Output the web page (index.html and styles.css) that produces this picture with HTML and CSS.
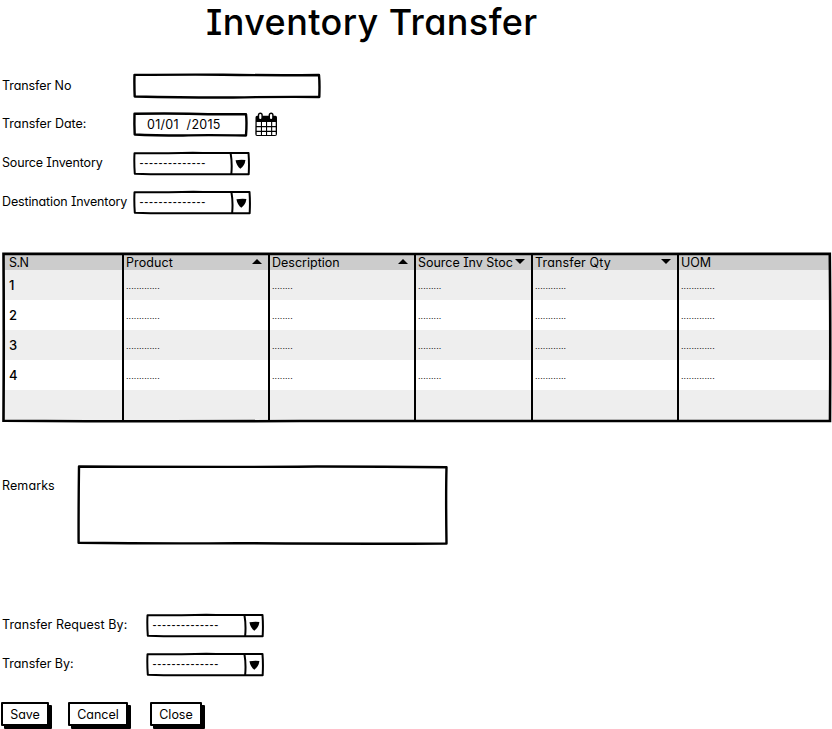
FILE: index.html
```html
<!DOCTYPE html>
<html lang="en">
<head>
<meta charset="utf-8">
<title>Inventory Transfer</title>
<link rel="stylesheet" href="styles.css">
</head>
<body>
<svg class="defs" width="0" height="0" aria-hidden="true">
  <symbol id="combo" viewBox="0 0 120 26">
    <path d="M1.500 2.200 Q40 2.200 60 1.700 Q95 2.400 116 1.900 Q116.800 12 116.200 23.200 Q80 23.500 50 23.200 Q25 23.700 1.800 22.700 Q1 12 1.500 2.200Z M98 2 Q99.800 12 98.700 23.500" fill="none" stroke="#000" stroke-width="2" stroke-linejoin="round"/>
    <path d="M103 9.300 Q108 8.500 112.900 9 Q112.300 14.500 107.800 17.700 Q104.200 15.500 103 9.300Z"/>
  </symbol>
</svg>
<main class="page">
  <h1 class="title">Inventory Transfer</h1>

  <form class="form">
    <div class="row">
      <label class="t-no">Transfer No</label>
      <div class="field field-no">
        <svg class="frame" viewBox="0 0 188 26"><path d="M1.500 1.900 Q50 1.500 90 1.700 Q140 2.500 186 2 Q186.800 10 186.300 24 Q140 23.700 100 24.500 Q60 24.800 1.700 23.500 Q1.200 12 1.500 1.900Z"/></svg>
      </div>
    </div>
    <div class="row">
      <label class="t-date">Transfer Date:</label>
      <div class="field field-date">
        <svg class="frame" viewBox="0 0 115 26"><path d="M1.500 1.700 Q50 1.200 75 2.200 L113 2.200 Q114 10 113 23.500 Q70 22.700 50 23.500 Q20 23.500 1.700 22.500 Q1.200 12 1.500 1.700Z"/></svg>
        <span class="date">01/01&nbsp; /2015</span>
      </div>
      <svg class="calendar" width="24" height="26" viewBox="0 0 24 26">
        <path d="M1.500 5.500 Q1.500 3.800 3 3.800 H21.500 Q23 3.800 23 5.500 V22 Q23 24 21 24 H3 Q1.300 24 1.300 22Z"/>
        <path d="M2.700 10h4.200v4H2.700zM8 10h4v4H8zM13.100 10h4v4h-4zM18.200 10h3.500v4h-3.500zM2.700 15.200h4.200v3.600H2.700zM8 15.200h4v3.600H8zM13.100 15.200h4v3.600h-4zM18.200 15.200h3.500v3.600h-3.500zM2.700 20h4.200v3H2.700zM8 20h4v3H8zM13.100 20h4v3h-4zM18.200 20h3.500v3h-3.500z" fill="#fff"/>
        <rect x="4.500" y="1.300" width="3.600" height="6.400" rx="1.800" fill="#fff" stroke="#000" stroke-width="1.400"/>
        <rect x="15.300" y="1.300" width="3.600" height="6.400" rx="1.800" fill="#fff" stroke="#000" stroke-width="1.400"/>
      </svg>
    </div>
    <div class="row">
      <label class="t-src">Source Inventory</label>
      <div class="field combo"><svg class="frame-combo" viewBox="0 0 120 26" preserveAspectRatio="none"><use href="#combo"/></svg><span class="dashes">--------------</span></div>
    </div>
    <div class="row">
      <label class="t-dst">Destination Inventory</label>
      <div class="field combo combo-wide"><svg class="frame-combo" viewBox="0 0 120 26" preserveAspectRatio="none"><use href="#combo"/></svg><span class="dashes">--------------</span></div>
    </div>
  </form>

  <section class="table">
    <div class="tr head">
      <span><b class="h-sn">S.N</b></span>
      <span><b class="h-pr">Product</b><i class="up"></i></span>
      <span><b class="h-de">Description</b><i class="up"></i></span>
      <span><b class="h-so">Source Inv Stoc</b><i class="down"></i></span>
      <span><b class="h-tr">Transfer Qty</b><i class="down"></i></span>
      <span><b class="h-uo">UOM</b></span>
    </div>
    <div class="tr"><span class="num">1</span><span class="dots">.............</span><span class="dots">........</span><span class="dots">.........</span><span class="dots">............</span><span class="dots">.............</span></div>
    <div class="tr"><span class="num">2</span><span class="dots">.............</span><span class="dots">........</span><span class="dots">.........</span><span class="dots">............</span><span class="dots">.............</span></div>
    <div class="tr"><span class="num">3</span><span class="dots">.............</span><span class="dots">........</span><span class="dots">.........</span><span class="dots">............</span><span class="dots">.............</span></div>
    <div class="tr"><span class="num">4</span><span class="dots">.............</span><span class="dots">........</span><span class="dots">.........</span><span class="dots">............</span><span class="dots">.............</span></div>
    <div class="tr"></div>
    <svg class="grid-lines" viewBox="0 0 832 172">
      <path d="M3.500 1.800 Q200 1.400 420 2 Q600 2.300 829.800 1.900 Q830.600 80 830 169 Q500 169.500 300 169 Q150 169.700 3.500 168.800 Q4 80 3.500 1.800Z"/>
      <path class="thin" d="M123 2V169M269 2V169M415 2V169M532 2V169M678 2V169"/>
    </svg>
  </section>

  <div class="remarks">
    <label class="t-rem">Remarks</label>
    <div class="field field-remarks">
      <svg class="frame" viewBox="0 0 372 81"><path d="M2 1.500 Q180 2.200 240 1.500 Q310 1.500 369.500 2.300 Q368.800 30 369.500 78.500 Q280 79 160 78.200 Q80 78.800 1.600 77.700 Q1.500 40 2 1.500Z"/></svg>
    </div>
  </div>

  <form class="form people">
    <div class="row">
      <label class="t-req">Transfer Request By:</label>
      <div class="field combo"><svg class="frame-combo" viewBox="0 0 120 26" preserveAspectRatio="none"><use href="#combo"/></svg><span class="dashes">--------------</span></div>
    </div>
    <div class="row">
      <label class="t-by">Transfer By:</label>
      <div class="field combo"><svg class="frame-combo" viewBox="0 0 120 26" preserveAspectRatio="none"><use href="#combo"/></svg><span class="dashes">--------------</span></div>
    </div>
  </form>

  <div class="buttons">
    <button class="btn save" type="button"><span>Save</span></button>
    <button class="btn cancel" type="button"><span>Cancel</span></button>
    <button class="btn close" type="button"><span>Close</span></button>
  </div>
</main>
</body>
</html>
```
FILE: styles.css
```css
* { box-sizing: border-box; }
body {
  margin: 0;
  background: #fff;
  color: #000;
  font: 400 12.5px/16px Inter, "Open Sans", sans-serif;
  font-feature-settings: "cv11", "cv08";
  overflow: hidden;
}
.defs { position: absolute; }
.page { display: flex; flex-direction: column; width: 832px; height: 729px; overflow: hidden; }
.title {
  height: 66px;
  margin: 0;
  padding: 0 0 0 206px;
  font-size: 36px;
  line-height: 45px;
  font-weight: 500;
  letter-spacing: 0.4px;
  white-space: nowrap;
}
.form { display: flex; flex-direction: column; }
.row { display: grid; grid-template-columns: 131px auto 1fr; align-items: center; height: 39px; padding-left: 2px; }
label { white-space: nowrap; }
.row label { padding-bottom: 2px; }
.row .t-no { padding-bottom: 0; letter-spacing: -0.08px; }
.t-date { letter-spacing: -0.03px; }
.t-src { letter-spacing: -0.15px; }
.t-dst { letter-spacing: -0.14px; }
.t-by { letter-spacing: -0.05px; }
.t-req { letter-spacing: 0.08px; }
.field { position: relative; display: flex; align-items: center; height: 26px; }
.frame, .frame-combo { position: absolute; inset: 0; width: 100%; height: 100%; overflow: visible; }
.frame path { fill: none; stroke: #000; stroke-width: 2.4; stroke-linejoin: round; }
.field-no { width: 188px; }
.field-date { width: 115px; }
.date { padding: 1px 0 0 14px; letter-spacing: 0.3px; }
.calendar { margin-left: 6px; }
.combo { width: 118px; }
.combo .frame-combo { width: 119.5px; }
.combo-wide .frame-combo { width: 120.5px; }
.people .combo .frame-combo { width: 120.5px; }
.dashes { padding: 0 0 2px 6.5px; font: 12px/16px "Liberation Sans", sans-serif; letter-spacing: 0.76px; }
.table { position: relative; margin-top: 30px; padding: 3px 2px 2px 4px; height: 171px; }
.tr { display: grid; grid-template-columns: 119px 146px 146px 117px 146px 1fr; height: 30px; background: #eee; }
.tr:nth-child(odd) { background: #fff; }
.tr.head { height: 15px; background: #ccc; line-height: 15px; }
.tr > span { padding-left: 3px; white-space: nowrap; }
.tr > span:first-child { padding-left: 5px; }
.head > span { display: flex; justify-content: space-between; padding-right: 7px; }
.head b { font-weight: inherit; }
.h-sn { letter-spacing: -0.5px; }
.h-pr { letter-spacing: 0.1px; }
.h-so { letter-spacing: -0.03px; }
.h-tr { letter-spacing: 0.15px; }
.up, .down { width: 10px; height: 5px; margin-top: 4px; background: #000; }
.up { clip-path: polygon(50% 0, 100% 100%, 0 100%); }
.down { clip-path: polygon(0 0, 100% 0, 50% 100%); }
.tr .num { font-size: 13px; line-height: 31px; font-weight: 500; }
.dots { font: 9px/30px "Liberation Sans", sans-serif; letter-spacing: 0.1px; padding-top: 1px; }
.grid-lines { position: absolute; left: 0; top: 0; width: 832px; height: 172px; }
.grid-lines path { fill: none; stroke: #000; stroke-width: 2.6; }
.grid-lines .thin { stroke-width: 2; }
.remarks { display: flex; margin-top: 42px; padding-left: 2px; height: 81px; }
.remarks label { width: 75px; padding-top: 13px; letter-spacing: 0.1px; }
.field-remarks { width: 372px; height: 81px; }
.people { margin-top: 60px; }
.people .row { grid-template-columns: 144px auto 1fr; }
.buttons { display: flex; margin-top: 18px; padding-left: 1px; }
.btn {
  height: 24px;
  padding: 2px 0 0;
  border: 2px solid #000;
  border-radius: 1px;
  background: #fff;
  box-shadow: 3px 3px 0 #000;
  color: #000;
  font: inherit;
  font-feature-settings: inherit;
}
.save { width: 48px; margin-right: 19px; }
.cancel { width: 60px; margin-right: 22px; }
.close { width: 52px; }
```
